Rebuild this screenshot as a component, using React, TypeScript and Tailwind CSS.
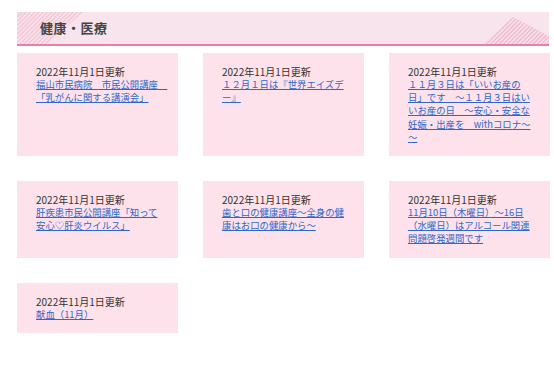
import React from 'react'

type Item = { date: string; title: string }

const ITEMS: Item[] = [
  { date: '2022年11月1日更新', title: '福山市民病院　市民公開講座　「乳がんに関する講演会」' },
  { date: '2022年11月1日更新', title: '１２月１日は『世界エイズデー』' },
  { date: '2022年11月1日更新', title: '１１月３日は「いいお産の日」です　～１１月３日はいいお産の日　～安心・安全な妊娠・出産を　withコロナ～～' },
  { date: '2022年11月1日更新', title: '肝疾患市民公開講座「知って安心♡肝炎ウイルス」' },
  { date: '2022年11月1日更新', title: '歯と口の健康講座～全身の健康はお口の健康から～' },
  { date: '2022年11月1日更新', title: '11月10日（木曜日）～16日（水曜日）はアルコール関連問題啓発週間です' },
  { date: '2022年11月1日更新', title: '献血（11月）' },
]

function Hatch({ id }: { id: string }) {
  return (
    <defs>
      <pattern id={id} width="3" height="3" patternUnits="userSpaceOnUse" patternTransform="rotate(45)">
        <rect width="1.3" height="3" fill="#eeb3c9" />
      </pattern>
    </defs>
  )
}

function SectionHeader({ title }: { title: string }) {
  return (
    <div className="relative h-[34px] w-[532px] bg-[#f8e4ec] border-b-2 border-[#f07ca7] flex items-center pl-[23px]">
      <svg className="absolute left-0 top-0" width="532" height="32" viewBox="0 0 532 32">
        <Hatch id="hatch-h" />
        <polygon points="0,0 66,0 30,32 0,32" fill="url(#hatch-h)" opacity="0.7" />
        <polygon points="466,32 496,5 532,24 532,32" fill="url(#hatch-h)" />
      </svg>
      <h2 className="relative text-[13px] font-bold text-[#444] tracking-[0.5px]">{title}</h2>
    </div>
  )
}

function Card({ item }: { item: Item }) {
  return (
    <div className="bg-[#fde2eb] pl-[19px] pr-[17px] py-[12px]">
      <p className="text-[10px] leading-[13px] text-[#333]">{item.date}</p>
      <p className="text-[9.4px] leading-[13.2px]">
        <a href="#" className="text-[#2f67c9] underline underline-offset-[1px]">{item.title}</a>
      </p>
    </div>
  )
}

export default function App() {
  return (
    <div
      className="w-[554px] h-[380px] bg-white pt-[12px] pl-[17px]"
      style={{ fontFamily: '"Noto Sans CJK JP", "Noto Sans", sans-serif' }}
    >
      <SectionHeader title="健康・医療" />
      <div className="mt-[7px] w-[533px] grid grid-cols-3 gap-[25px] items-stretch">
        {ITEMS.map((item, i) => (
          <Card key={i} item={item} />
        ))}
      </div>
    </div>
  )
}
